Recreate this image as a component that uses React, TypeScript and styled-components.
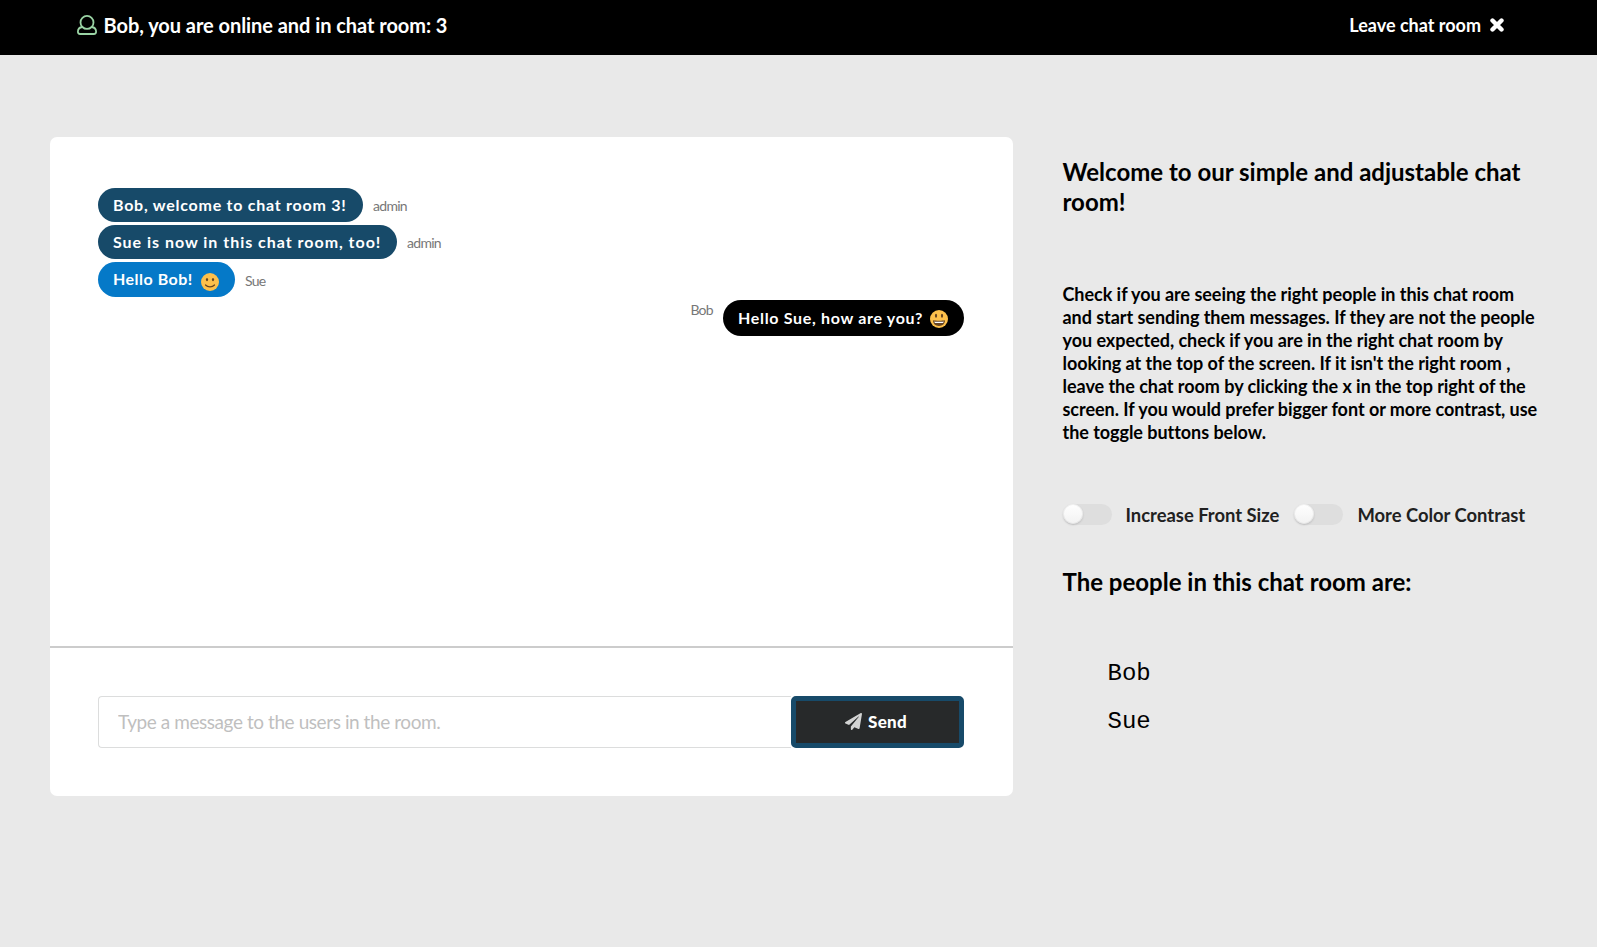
import React from "react";
import styled, { createGlobalStyle } from "styled-components";

const GlobalStyle = createGlobalStyle`
  *, *::before, *::after { box-sizing: border-box; }
  body {
    margin: 0;
    background: #e9e9e9;
    color: #000;
    font-family: Lato, "Liberation Sans", sans-serif;
    font-variant-ligatures: none;
  }
`;

const Page = styled.div`
  min-height: 947px;
`;

const TopBar = styled.header`
  height: 55px;
  padding: 0 93px 5px 77px;
  display: flex;
  align-items: center;
  justify-content: space-between;
  background: #000;
  color: #fff;
  font-weight: 700;
`;

const Status = styled.div`
  display: flex;
  align-items: center;
  gap: 6.5px;
  font-size: 20px;
  letter-spacing: -0.05px;
  white-space: nowrap;
`;

const LeaveLink = styled.a`
  display: flex;
  align-items: center;
  gap: 9px;
  font-size: 18px;
  white-space: nowrap;
`;

const Main = styled.main`
  display: flex;
  align-items: flex-start;
  padding: 82px 50px 0;
`;

const ChatCard = styled.section`
  width: 963px;
  height: 659px;
  flex: none;
  display: flex;
  flex-direction: column;
  border-radius: 7px;
  background: #fff;
  overflow: hidden;
`;

const MessageList = styled.div`
  height: 511px;
  padding: 51px 49px 0 48px;
  border-bottom: 2px solid #ccc;
  display: flex;
  flex-direction: column;
  gap: 3px;
`;

const MessageRow = styled.div<{ $own?: boolean }>`
  display: flex;
  align-items: ${(p) => (p.$own ? "flex-start" : "center")};
  justify-content: ${(p) => (p.$own ? "flex-end" : "flex-start")};
  gap: 10px;
`;

const Bubble = styled.div<{ $color: string; $width: number; $height: number; $spacing: number }>`
  width: ${(p) => p.$width}px;
  height: ${(p) => p.$height}px;
  padding: 0 16px 2px 15px;
  display: flex;
  align-items: center;
  justify-content: space-between;
  border-radius: 18px;
  background: ${(p) => p.$color};
  color: #fff;
  font-size: 16px;
  font-weight: 700;
  letter-spacing: ${(p) => p.$spacing}px;
  white-space: nowrap;
`;

const Sender = styled.span`
  padding-top: 1px;
  color: #777;
  font-size: 14px;
  letter-spacing: -0.7px;
`;

const Composer = styled.form`
  display: flex;
  padding: 48px 49px 0 48px;
`;

const MessageInput = styled.input`
  width: 693px;
  height: 52px;
  padding: 0 19px 1px;
  border: 1px solid #dcdddd;
  border-right: 0;
  border-radius: 4px 0 0 4px;
  background: #fff;
  font: 400 19px Lato, sans-serif;
  letter-spacing: -0.43px;
  outline: none;
  &::placeholder { color: #bfbfbf; opacity: 1; }
`;

const SendButton = styled.button`
  width: 173px;
  height: 52px;
  padding: 0 3px 2px 0;
  display: flex;
  align-items: center;
  justify-content: center;
  gap: 6px;
  border: 5px solid #174a69;
  border-radius: 5px;
  background: #27292a;
  color: #fff;
  font: 900 17px Lato, sans-serif;
  letter-spacing: 0.3px;
`;

const Sidebar = styled.aside`
  width: 482px;
  margin-left: 49.5px;
  padding-top: 20px;
`;

const Heading = styled.h2`
  margin: 0;
  font-size: 24px;
  line-height: 30px;
  font-weight: 700;
`;

const Intro = styled.p`
  margin: 66px 0 0;
  font-size: 18px;
  line-height: 23px;
  letter-spacing: -0.04px;
  font-weight: 700;
`;

const Toggles = styled.div`
  display: flex;
  gap: 15px;
  margin: 60px 0 42px;
`;

const ToggleLabel = styled.label`
  display: flex;
  align-items: center;
  gap: 14px;
  height: 21px;
  color: #212121;
  font-size: 18.4px;
  font-weight: 700;
  white-space: nowrap;
`;

const Track = styled.span`
  width: 49px;
  height: 21px;
  border-radius: 11px;
  background: #dedede;
`;

const Knob = styled.span`
  display: block;
  width: 20px;
  height: 20px;
  border-radius: 50%;
  background: linear-gradient(#fff, #f2f2f2);
  box-shadow: 0 1px 2px rgba(34, 36, 38, 0.18), 0 0 0 1px rgba(34, 36, 38, 0.06) inset;
`;

const People = styled.ul`
  list-style: none;
  margin: 53px 0 0;
  padding: 0 0 0 45px;
  font: 24px/47.5px "Liberation Mono", monospace;
`;

const EmojiSlot = styled.span<{ $open: boolean }>`
  display: flex;
  padding-top: ${(p) => (p.$open ? 4 : 7)}px;
`;

const UserIcon = () => (
  <svg width="20" height="20" viewBox="0 0 20 20" fill="none" stroke="#9ad3a4" strokeWidth="1.8" strokeLinejoin="round">
    <circle cx="10" cy="7.4" r="6.5" />
    <path d="M5.300 12C2.400 12.300 .9 14.200 .9 16.800c0 1.400.8 2.200 2.200 2.200h13.800c1.400 0 2.200-.8 2.200-2.200 0-2.600-1.500-4.500-4.400-4.800" />
  </svg>
);

const CloseIcon = () => (
  <svg width="14" height="14" viewBox="0 0 14 14" stroke="#fff" strokeWidth="4.400" strokeLinecap="round">
    <path d="M2.500 2.500l9 9M11.500 2.500l-9 9" />
  </svg>
);

const PlaneIcon = () => (
  <svg width="17" height="17" viewBox="0 0 512 512" fill="#d2d3d3">
    <path d="M476 3.200L12.500 270.600c-18.100 10.400-15.800 35.600 2.200 43.200L121 358.400l287.300-253.200c5.500-4.900 13.300 2.600 8.600 8.300L176 407v80.500c0 23.600 28.500 32.900 42.500 15.800L282 426l124.600 52.200c14.200 6 30.400-2.900 33-18.200l72-432C515 7.800 493.300-6.800 476 3.200z" />
  </svg>
);

const Smile = ({ open }: { open: boolean }) => (
  <svg width="18" height="18" viewBox="0 0 18 18">
    <circle cx="9" cy="9" r="9" fill="#fdc04b" />
    <ellipse cx="6" cy={open ? 5.7 : 6.6} rx="1.1" ry={open ? 2 : 1.6} fill="#664422" />
    <ellipse cx="12" cy={open ? 5.7 : 6.6} rx="1.1" ry={open ? 2 : 1.6} fill="#664422" />
    {open ? (
      <>
        <path d="M3 10.300c2 .6 10 .6 12 0 0 3.400-2.400 5.700-6 5.700s-6-2.300-6-5.700z" fill="#664422" />
        <path d="M4.300 11.400c2 .4 7.400 .4 9.400 0-.2 1.100-.7 1.700-1.300 1.700h-6.800c-.6 0-1.100-.6-1.300-1.700z" fill="#fff" />
      </>
    ) : (
      <path d="M4.500 12c2.300 2.600 6.700 2.600 9 0" fill="none" stroke="#664422" strokeWidth="1.200" strokeLinecap="round" />
    )}
  </svg>
);

interface Message {
  text: string;
  sender: string;
  color: string;
  width: number;
  height: number;
  spacing: number;
  own?: boolean;
  emoji?: "smile" | "grin";
}

const messages: Message[] = [
  { text: "Bob, welcome to chat room 3!", sender: "admin", color: "#174a69", width: 265, height: 34, spacing: 0.75 },
  { text: "Sue is now in this chat room, too!", sender: "admin", color: "#174a69", width: 299, height: 34, spacing: 0.98 },
  { text: "Hello Bob!", sender: "Sue", color: "#0579c8", width: 137, height: 35, spacing: 0.5, emoji: "smile" },
  { text: "Hello Sue, how are you?", sender: "Bob", color: "#000", width: 241, height: 36, spacing: 0.68, own: true, emoji: "grin" },
];

export default function App() {
  return (
    <Page>
      <GlobalStyle />
      <TopBar>
        <Status>
          <UserIcon />
          <span>Bob, you are online and in chat room: 3</span>
        </Status>
        <LeaveLink>
          <span>Leave chat room</span>
          <CloseIcon />
        </LeaveLink>
      </TopBar>
      <Main>
        <ChatCard>
          <MessageList>
            {messages.map((m) => (
              <MessageRow key={m.text} $own={m.own}>
                {m.own && <Sender>{m.sender}</Sender>}
                <Bubble $color={m.color} $width={m.width} $height={m.height} $spacing={m.spacing}>
                  <span>{m.text}</span>
                  {m.emoji && (
                    <EmojiSlot $open={m.emoji === "grin"}>
                      <Smile open={m.emoji === "grin"} />
                    </EmojiSlot>
                  )}
                </Bubble>
                {!m.own && <Sender>{m.sender}</Sender>}
              </MessageRow>
            ))}
          </MessageList>
          <Composer>
            <MessageInput placeholder="Type a message to the users in the room." />
            <SendButton type="button">
              <PlaneIcon />
              Send
            </SendButton>
          </Composer>
        </ChatCard>
        <Sidebar>
          <Heading>Welcome to our simple and adjustable chat room!</Heading>
          <Intro>
            Check if you are seeing the right people in this chat room and start sending them messages. If they are not
            the people you expected, check if you are in the right chat room by looking at the top of the screen. If it
            isn't the right room , leave the chat room by clicking the x in the top right of the screen. If you would
            prefer bigger font or more contrast, use the toggle buttons below.
          </Intro>
          <Toggles>
            {["Increase Front Size", "More Color Contrast"].map((label) => (
              <ToggleLabel key={label}>
                <Track>
                  <Knob />
                </Track>
                {label}
              </ToggleLabel>
            ))}
          </Toggles>
          <Heading>The people in this chat room are:</Heading>
          <People>
            <li>Bob</li>
            <li>Sue</li>
          </People>
        </Sidebar>
      </Main>
    </Page>
  );
}
